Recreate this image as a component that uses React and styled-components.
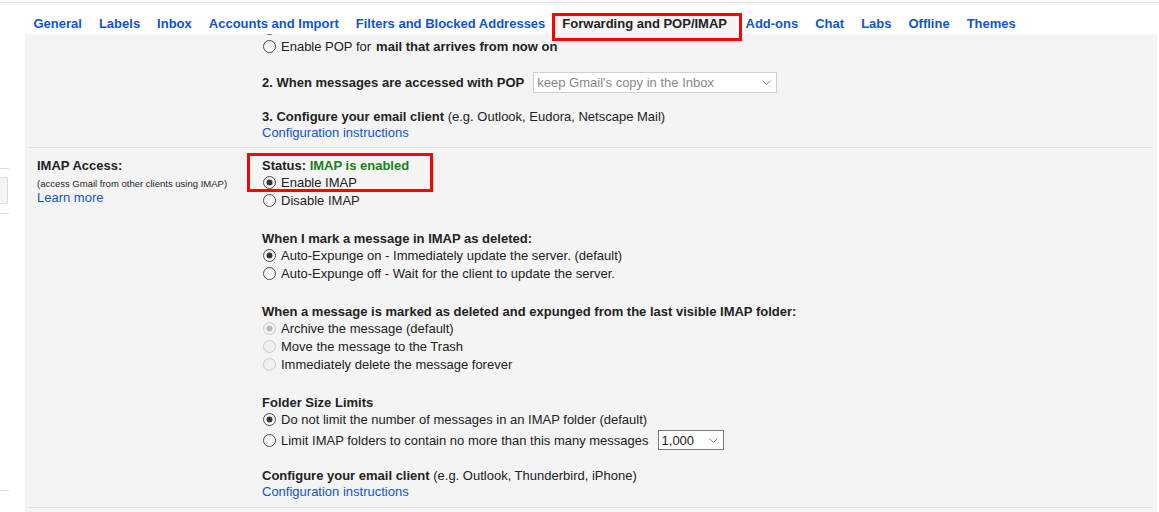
import React from 'react';
import styled, { createGlobalStyle, css } from 'styled-components';

const GlobalStyle = createGlobalStyle`
  html, body {
    margin: 0;
    padding: 0;
    background: #fff;
    overflow: hidden;
  }
  body {
    font-family: "Liberation Sans", Arial, sans-serif;
    font-size: 13px;
    color: #222;
  }
`;

const Page = styled.div`
  margin-top: 2px;
  border-top: 1px solid #e5e5e5;
  display: flex;
  height: 509px;
`;

const Sidebar = styled.div`
  width: 25px;
  flex-shrink: 0;
  padding-top: 165px;
  box-sizing: border-box;
`;

const SideLine = styled.div`
  width: 9px;
  border-top: 1px solid #e0e0e0;
  margin-top: ${(p) => p.$gap || 0}px;
`;

const SideButton = styled.div`
  width: 8px;
  height: 27px;
  margin-top: 8px;
  box-sizing: border-box;
  border: 1px solid #dcdcdc;
  border-left: none;
  border-radius: 0 2px 2px 0;
  background: #f5f5f5;
`;

const Main = styled.div`
  flex: 1;
  display: flex;
  flex-direction: column;
  min-width: 0;
`;

const TabBar = styled.div`
  display: flex;
  align-items: flex-end;
  height: 31px;
  position: relative;
  z-index: 1;
`;

const Tab = styled.div`
  position: relative;
  box-sizing: border-box;
  padding: 1px 8.5px 0;
  height: 21px;
  line-height: 20px;
  font-weight: bold;
  white-space: nowrap;
  color: #15c;
  cursor: pointer;

  ${(p) =>
    p.$active &&
    css`
      color: #222;
      background: #f4f4f4;
      padding-right: 10px;
    `}
`;

// red annotation frames drawn over the screenshot
const Marker = styled.span`
  position: absolute;
  box-sizing: border-box;
  border: 3px solid #f00;
  pointer-events: none;
  ${(p) => p.$box}
`;

const Panel = styled.div`
  flex: 1;
  margin-right: 2px;
  background: #f4f4f4;
  overflow: hidden;
`;

const Section = styled.div`
  display: grid;
  grid-template-columns: 235px 1fr;
  margin: 0 5px 0 2px;
  padding: ${(p) => p.$pad};
  border-bottom: 1px solid #e2e2e2;
`;

const LabelCol = styled.div`
  padding-left: 10px;
`;

const LabelTitle = styled.div`
  font-weight: bold;
  padding-top: 2px;
  line-height: 14px;
`;

const LabelNote = styled.div`
  font-size: 9.5px;
  padding-top: 3px;
  line-height: 15px;
  white-space: nowrap;
`;

const Link = styled.a`
  display: block;
  color: #15c;
  padding-top: ${(p) => p.$pt ?? 2}px;
  line-height: ${(p) => p.$lh || 14}px;
  text-decoration: none;
  cursor: pointer;
`;

const Content = styled.div`
  margin-top: ${(p) => p.$offset || 0}px;
`;

const Group = styled.div`
  position: relative;
  margin-top: ${(p) => p.$top || 0}px;
`;

const Heading = styled.div`
  padding-top: 2px;
  line-height: 14px;
  white-space: nowrap;
`;

const Status = styled.span`
  color: #188018;
  font-weight: bold;
`;

const Row = styled.label`
  display: flex;
  align-items: center;
  gap: 5px;
  height: ${(p) => p.$h || 18}px;
  white-space: nowrap;
`;

const Radio = styled.span`
  margin-left: 1px;
  width: 13px;
  height: 13px;
  flex-shrink: 0;
  box-sizing: border-box;
  border-radius: 50%;
  border: 1px solid ${(p) => (p.$disabled ? '#cacaca' : '#4a4a4a')};
  background: ${(p) =>
    p.$disabled ? '#f0f0f0' : 'linear-gradient(#eee, #fff)'};
  display: flex;
  align-items: center;
  justify-content: center;

  &::after {
    content: '';
    display: ${(p) => (p.$checked ? 'block' : 'none')};
    width: 5px;
    height: 5px;
    border-radius: 50%;
    background: ${(p) => (p.$disabled ? '#b5b5b5' : '#333')};
    box-shadow: 0 0 0 0.5px ${(p) => (p.$disabled ? '#c5c5c5' : '#444')};
  }
`;

const Select = styled.span`
  display: inline-flex;
  align-items: center;
  justify-content: space-between;
  box-sizing: border-box;
  width: ${(p) => p.$w}px;
  height: ${(p) => p.$h}px;
  margin-left: 4px;
  padding: 0 5px 0 3px;
  background: #fff;
  border: 1px solid ${(p) => (p.$muted ? '#cfcfcf' : '#7a7a7a')};
  color: ${(p) => (p.$muted ? '#888' : '#222')};
`;

const Chevron = () => (
  <svg width="9" height="5" viewBox="0 0 9 5">
    <polyline
      points="0.5,0.5 4.5,4.5 8.5,0.5"
      fill="none"
      stroke="#8a8a8a"
      strokeWidth="1"
    />
  </svg>
);

const tabs = [
  'General',
  'Labels',
  'Inbox',
  'Accounts and Import',
  'Filters and Blocked Addresses',
  'Forwarding and POP/IMAP',
  'Add-ons',
  'Chat',
  'Labs',
  'Offline',
  'Themes',
];

const Option = ({ checked, disabled, children, h }) => (
  <Row $h={h}>
    <Radio $checked={checked} $disabled={disabled} />
    {children}
  </Row>
);

export default function App() {
  return (
    <>
      <GlobalStyle />
      <Page>
        <Sidebar>
          <SideLine />
          <SideButton />
          <SideLine $gap={9} />
          <SideLine $gap={276} />
        </Sidebar>
        <Main>
          <TabBar>
            {tabs.map((t) => (
              <Tab key={t} $active={t === 'Forwarding and POP/IMAP'}>
                {t}
                {t === 'Forwarding and POP/IMAP' && (
                  <Marker $box="top: 0; left: -2px; right: -5px; bottom: -7px;" />
                )}
              </Tab>
            ))}
          </TabBar>
          <Panel>
            <Section $pad="0 0 7px 0">
              <LabelCol />
              <Content $offset={-15}>
                {/* row scrolled out of view above */}
                <Option />
                <Option>
                  Enable POP for <b>mail that arrives from now on</b>
                </Option>
                <Group $top={17}>
                  <Row $h={21} as="div">
                    <b>2. When messages are accessed with POP</b>
                    <Select $w={244} $h={21} $muted>
                      keep Gmail's copy in the Inbox
                      <Chevron />
                    </Select>
                  </Row>
                </Group>
                <Group $top={15}>
                  <Heading>
                    <b>3. Configure your email client</b> (e.g. Outlook,
                    Eudora, Netscape Mail)
                  </Heading>
                  <Link>Configuration instructions</Link>
                </Group>
              </Content>
            </Section>

            <Section $pad="9px 0 8px 0">
              <LabelCol>
                <LabelTitle>IMAP Access:</LabelTitle>
                <LabelNote>(access Gmail from other clients using IMAP)</LabelNote>
                <Link $pt={0}>Learn more</Link>
              </LabelCol>
              <Content>
                <Group>
                  <Heading>
                    <b>Status: </b>
                    <Status>IMAP is enabled</Status>
                  </Heading>
                  <Option checked>Enable IMAP</Option>
                  <Marker $box="top: -4px; left: -15px; width: 186px; height: 39px;" />
                  <Option>Disable IMAP</Option>
                </Group>

                <Group $top={21}>
                  <Heading>
                    <b>When I mark a message in IMAP as deleted:</b>
                  </Heading>
                  <Option checked>
                    Auto-Expunge on - Immediately update the server. (default)
                  </Option>
                  <Option>
                    Auto-Expunge off - Wait for the client to update the server.
                  </Option>
                </Group>

                <Group $top={21}>
                  <Heading>
                    <b>
                      When a message is marked as deleted and expunged from the
                      last visible IMAP folder:
                    </b>
                  </Heading>
                  <Option checked disabled>
                    Archive the message (default)
                  </Option>
                  <Option disabled>Move the message to the Trash</Option>
                  <Option disabled>Immediately delete the message forever</Option>
                </Group>

                <Group $top={21}>
                  <Heading>
                    <b>Folder Size Limits</b>
                  </Heading>
                  <Option checked>
                    Do not limit the number of messages in an IMAP folder
                    (default)
                  </Option>
                  <Option h={24}>
                    Limit IMAP folders to contain no more than this many
                    messages
                    <Select $w={66} $h={20}>
                      1,000
                      <Chevron />
                    </Select>
                  </Option>
                </Group>

                <Group $top={15}>
                  <Heading>
                    <b>Configure your email client</b> (e.g. Outlook,
                    Thunderbird, iPhone)
                  </Heading>
                  <Link>Configuration instructions</Link>
                </Group>
              </Content>
            </Section>
          </Panel>
        </Main>
      </Page>
    </>
  );
}
